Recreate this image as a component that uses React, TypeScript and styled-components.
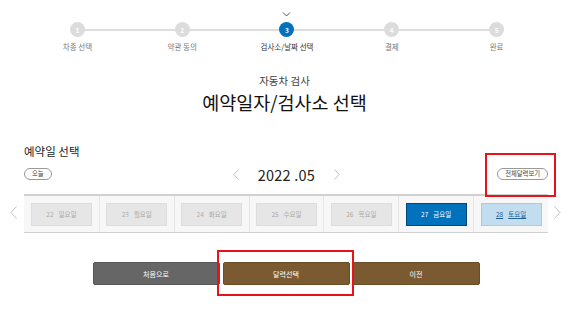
import React from 'react';
import styled, { createGlobalStyle } from 'styled-components';

const GlobalStyle = createGlobalStyle`
  html, body {
    margin: 0;
    padding: 0;
    background: #ffffff;
    font-family: "Noto Sans CJK KR", "Noto Sans", sans-serif;
  }
`;

const Page = styled.div`
  width: 569px;
  height: 324px;
  position: relative;
  overflow: hidden;
`;

const Stepper = styled.div`
  position: relative;
  display: grid;
  grid-template-columns: repeat(5, 1fr);
  width: 524px;
  margin: 0 0 0 25px;
  padding-top: 11px;
`;

const StepLine = styled.div`
  position: absolute;
  top: 29px;
  left: 52px;
  right: 52px;
  height: 2px;
  background: #dddddd;
`;

const Step = styled.div`
  display: flex;
  flex-direction: column;
  align-items: center;
  position: relative;
`;

const Caret = styled.svg<{ $show: boolean }>`
  height: 7px;
  width: 9px;
  visibility: ${p => (p.$show ? 'visible' : 'hidden')};
`;

const Circle = styled.div<{ $active: boolean }>`
  width: 15px;
  height: 15px;
  border-radius: 50%;
  margin-top: 4px;
  background: ${p => (p.$active ? '#0071bc' : '#dcdcdc')};
  color: #ffffff;
  font-size: 6.5px;
  font-weight: 700;
  display: flex;
  align-items: center;
  justify-content: center;
  position: relative;
  z-index: 1;
`;

const StepLabel = styled.div<{ $active: boolean }>`
  margin-top: 4px;
  font-size: 7.5px;
  color: ${p => (p.$active ? '#333333' : '#777777')};
  white-space: nowrap;
`;

const Heading = styled.div`
  text-align: center;
  margin-top: 22px;
`;

const SubTitle = styled.div`
  font-size: 10.5px;
  color: #444444;
  line-height: 14px;
`;

const Title = styled.h1`
  margin: 2px 0 0;
  font-size: 18.5px;
  font-weight: 400;
  color: #111111;
  line-height: 24px;
`;

const Section = styled.div`
  width: 524px;
  margin: 30px 0 0 24px;
  position: relative;
`;

const SectionTitle = styled.div`
  font-size: 11.5px;
  color: #222222;
  line-height: 14px;
`;

const MonthRow = styled.div`
  display: flex;
  align-items: center;
  justify-content: space-between;
  height: 24px;
  margin-top: 4px;
`;

const Pill = styled.button`
  height: 12px;
  padding: 0 7px;
  border: 1px solid #999999;
  border-radius: 7px;
  background: #ffffff;
  font-family: inherit;
  font-size: 6.3px;
  color: #444444;
  line-height: 10px;
  cursor: pointer;
  box-sizing: border-box;
`;

const MonthNav = styled.div`
  display: flex;
  align-items: center;
  gap: 19px;
  margin-left: 24px;
`;

const MonthText = styled.div`
  font-size: 14.5px;
  color: #222222;
  letter-spacing: 0.2px;
`;

const Chevron = styled.svg`
  width: 6px;
  height: 11px;
`;

const StripWrap = styled.div`
  position: relative;
  margin-top: 8px;
`;

const Strip = styled.div`
  display: grid;
  grid-template-columns: repeat(7, 1fr);
  border-top: 2px solid #d0d0d0;
  border-bottom: 1px solid #d0d0d0;
  background: #f7f7f7;
  height: 36px;
`;

const Cell = styled.div`
  display: flex;
  align-items: center;
  justify-content: center;
  border-left: 1px solid #e6e6e6;
  &:first-child {
    border-left: none;
  }
`;

const DayBox = styled.div<{ $kind: 'off' | 'active' | 'open' }>`
  width: 61px;
  height: 23px;
  box-sizing: border-box;
  display: flex;
  align-items: center;
  justify-content: center;
  gap: 5px;
  font-size: 6.5px;
  border: 1px solid
    ${p => (p.$kind === 'active' ? '#00477a' : p.$kind === 'open' ? '#a6cbe8' : '#dddddd')};
  background: ${p => (p.$kind === 'active' ? '#0071bc' : p.$kind === 'open' ? '#c3ddf0' : '#e6e6e6')};
  color: ${p => (p.$kind === 'active' ? '#ffffff' : p.$kind === 'open' ? '#1f5f97' : '#aaaaaa')};
  text-decoration: ${p => (p.$kind === 'open' ? 'underline' : 'none')};
`;

const SideArrow = styled.svg<{ $side: 'left' | 'right' }>`
  position: absolute;
  top: 12px;
  ${p => (p.$side === 'left' ? 'left: -14px;' : 'right: -13px;')}
  width: 7px;
  height: 13px;
`;

const Buttons = styled.div`
  display: flex;
  justify-content: center;
  gap: 3px;
  margin-top: 29px;
  margin-left: 3px;
`;

const ActionButton = styled.button<{ $tone: 'grey' | 'brown' }>`
  width: 127px;
  height: 23px;
  border: 1px solid ${p => (p.$tone === 'grey' ? '#555555' : '#6a4c26')};
  border-radius: 2px;
  background: ${p => (p.$tone === 'grey' ? '#666666' : '#7b5a31')};
  color: #ffffff;
  font-family: inherit;
  font-size: 7px;
  cursor: pointer;
`;

const Highlight = styled.div<{ $x: number; $y: number; $w: number; $h: number }>`
  position: absolute;
  left: ${p => p.$x}px;
  top: ${p => p.$y}px;
  width: ${p => p.$w}px;
  height: ${p => p.$h}px;
  border: 2px solid #e8121b;
  box-sizing: border-box;
  pointer-events: none;
`;

const steps = ['차종 선택', '약관 동의', '검사소/날짜 선택', '결제', '완료'];

const days: { d: number; name: string; kind: 'off' | 'active' | 'open' }[] = [
  { d: 22, name: '일요일', kind: 'off' },
  { d: 23, name: '월요일', kind: 'off' },
  { d: 24, name: '화요일', kind: 'off' },
  { d: 25, name: '수요일', kind: 'off' },
  { d: 26, name: '목요일', kind: 'off' },
  { d: 27, name: '금요일', kind: 'active' },
  { d: 28, name: '토요일', kind: 'open' },
];

const App: React.FC = () => {
  return (
    <Page>
      <GlobalStyle />
      <Stepper>
        <StepLine />
        {steps.map((s, i) => (
          <Step key={s}>
            <Caret $show={i === 2} viewBox="0 0 9 7">
              <path d="M1 1.5 L4.5 5 L8 1.5" fill="none" stroke="#555" strokeWidth="1" />
            </Caret>
            <Circle $active={i === 2}>{i + 1}</Circle>
            <StepLabel $active={i === 2}>{s}</StepLabel>
          </Step>
        ))}
      </Stepper>

      <Heading>
        <SubTitle>자동차 검사</SubTitle>
        <Title>예약일자/검사소 선택</Title>
      </Heading>

      <Section>
        <SectionTitle>예약일 선택</SectionTitle>
        <MonthRow>
          <Pill>오늘</Pill>
          <MonthNav>
            <Chevron viewBox="0 0 6 11">
              <path d="M5.5 0.5 L0.8 5.5 L5.5 10.5" fill="none" stroke="#bbb" strokeWidth="0.9" />
            </Chevron>
            <MonthText>2022 .05</MonthText>
            <Chevron viewBox="0 0 6 11">
              <path d="M0.5 0.5 L5.2 5.5 L0.5 10.5" fill="none" stroke="#bbb" strokeWidth="0.9" />
            </Chevron>
          </MonthNav>
          <Pill>전체달력보기</Pill>
        </MonthRow>

        <StripWrap>
          <SideArrow $side="left" viewBox="0 0 7 13">
            <path d="M6.5 0.5 L1 6.5 L6.5 12.5" fill="none" stroke="#bbb" strokeWidth="0.9" />
          </SideArrow>
          <Strip>
            {days.map(day => (
              <Cell key={day.d}>
                <DayBox $kind={day.kind}>
                  <span>{day.d}</span>
                  <span>{day.name}</span>
                </DayBox>
              </Cell>
            ))}
          </Strip>
          <SideArrow $side="right" viewBox="0 0 7 13">
            <path d="M0.5 0.5 L6 6.5 L0.5 12.5" fill="none" stroke="#bbb" strokeWidth="0.9" />
          </SideArrow>
        </StripWrap>
      </Section>

      <Buttons>
        <ActionButton $tone="grey">처음으로</ActionButton>
        <ActionButton $tone="brown">달력선택</ActionButton>
        <ActionButton $tone="brown">이전</ActionButton>
      </Buttons>

      <Highlight $x={485} $y={153} $w={71} $h={44} />
      <Highlight $x={217} $y={250} $w={137} $h={46} />
    </Page>
  );
};

export default App;
